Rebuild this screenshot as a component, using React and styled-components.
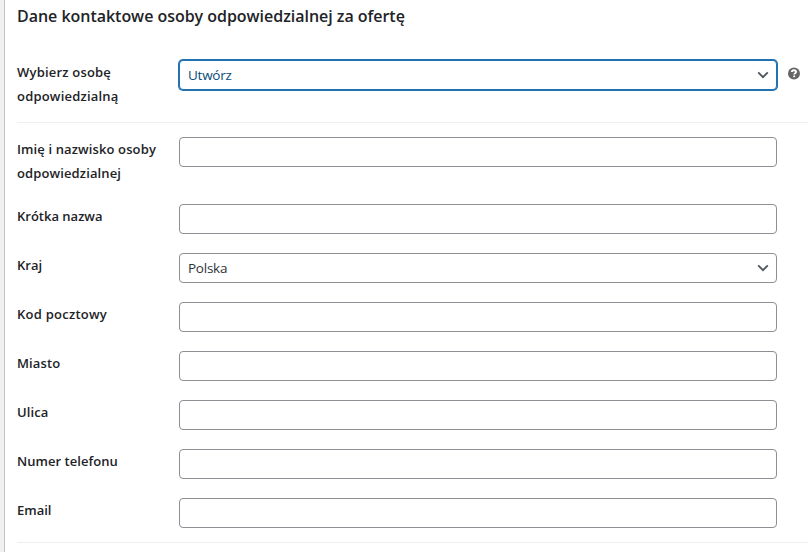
import React from "react";
import styled, { createGlobalStyle, css } from "styled-components";

const Global = createGlobalStyle`
  * { box-sizing: border-box; }
  body { margin: 0; background: #f0f0f1; overflow: hidden; }
`;
const Panel = styled.main`
  height: 552px;
  margin-left: 4px;
  padding-left: 12px;
  border-left: 1px solid #c3c4c7;
  background: #fff;
  overflow: hidden;
  color: #1d2327;
  font-family: "Open Sans", "Noto Sans", sans-serif;
`;
const Title = styled.h2`
  margin: 0;
  height: 60px;
  padding-top: 5px;
  font-size: 16px;
  line-height: 22px;
  font-weight: 600;
  letter-spacing: -0.03px;
  white-space: nowrap;
`;
const Group = styled.section`
  display: flex;
  flex-direction: column;
  gap: 19px;
  padding-bottom: 14px;
  border-bottom: 1px solid #eee;

  & + & {
    padding-top: 14px;
  }
`;
const Row = styled.div`
  display: flex;
  align-items: flex-start;
  min-height: 30px;
`;
const Label = styled.label`
  width: 162px;
  flex: none;
  font-size: 13px;
  line-height: 24px;
  font-weight: 600;
  letter-spacing: ${(p) => p.$spacing ?? 0.12}px;
  white-space: pre-line;
`;
const field = css`
  width: 598px;
  height: 30px;
  flex: none;
  margin: 0;
  border: 1px solid #8c8f94;
  border-radius: 4px;
  background: #fff;
`;
const Input = styled.input`
  ${field}
  outline: none;
`;
const Select = styled.button`
  ${field}
  display: flex;
  align-items: center;
  justify-content: space-between;
  padding: 0 7px 0 8px;
  color: #2c3338;
  font: 400 13.5px "Open Sans", "Noto Sans", sans-serif;
  letter-spacing: -0.25px;
  ${(p) => p.$active && css`
    border-color: #2271b1;
    box-shadow: 0 0 0 1px #2271b1;
    color: #0a4b78;
  `}
`;
const Help = styled.svg`
  flex: none;
  margin: 7px 0 0 10px;
`;
const Chevron = () => (
  <svg width="12" height="8" viewBox="0 0 12 8" fill="none" stroke="#50575e" strokeWidth="1.9">
    <path d="M1.2 1.4L6 6.1l4.8-4.7" />
  </svg>
);
const fields = [
  { name: "Krótka nazwa", spacing: 0 },
  { name: "Kraj", value: "Polska", spacing: 0 },
  { name: "Kod pocztowy", spacing: 0.25 },
  { name: "Miasto" },
  { name: "Ulica" },
  { name: "Numer telefonu", spacing: 0.05 },
  { name: "Email", spacing: 0 },
];

export default function App() {
  return (
    <>
      <Global />
      <Panel>
        <Title>Dane kontaktowe osoby odpowiedzialnej za ofertę</Title>
        <Group>
          <Row>
            <Label $spacing={0.2}>{"Wybierz osobę\nodpowiedzialną"}</Label>
            <Select $active>Utwórz<Chevron /></Select>
            <Help width="14" height="14" viewBox="0 0 14 14">
              <circle cx="7" cy="6.5" r="6" fill="#666" />
              <path d="M4.8 5c.2-2.5 4.3-2.2 4.3 0 0 1.4-1.9 1.2-1.9 2.6M7.2 8.5v1.8" fill="none" stroke="#fff" strokeWidth="1.8" />
            </Help>
          </Row>
        </Group>
        <Group>
          <Row>
            <Label>{"Imię i nazwisko osoby\nodpowiedzialnej"}</Label>
            <Input />
          </Row>
          {fields.map(({ name, value, spacing }) => (
            <Row key={name}>
              <Label $spacing={spacing}>{name}</Label>
              {value ? <Select>{value}<Chevron /></Select> : <Input />}
            </Row>
          ))}
        </Group>
      </Panel>
    </>
  );
}
